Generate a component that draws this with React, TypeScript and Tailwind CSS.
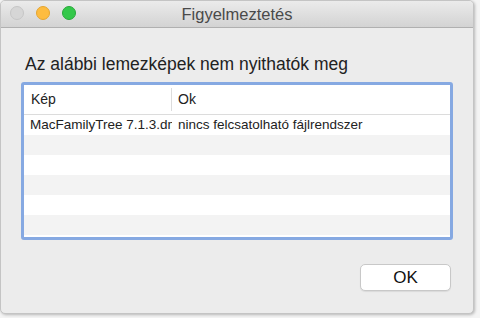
import React from 'react';

const rows = [
  { kep: 'MacFamilyTree 7.1.3.dmg', ok: 'nincs felcsatolható fájlrendszer' },
  { kep: '', ok: '' },
  { kep: '', ok: '' },
  { kep: '', ok: '' },
  { kep: '', ok: '' },
  { kep: '', ok: '' },
];

export default function App() {
  return (
    <div className="w-[480px] h-[318px] bg-[#f4f4f4] overflow-hidden font-['Liberation_Sans',sans-serif]">
      <div className="w-[474px] h-[314px] flex flex-col bg-[#ececec] rounded-[5px] border border-[#c4c4c4] overflow-hidden shadow-[1px_1px_3px_rgba(0,0,0,0.25)]">
        <div className="relative h-[27px] shrink-0 flex items-center justify-center bg-gradient-to-b from-[#ebebeb] to-[#d3d3d3] border-b border-[#b0b0b0]">
          <div className="absolute left-[9px] top-[5px] flex gap-[12px]">
            <span className="w-[14px] h-[14px] rounded-full bg-[#d6d6d6] border border-[#c6c6c6]" />
            <span className="w-[14px] h-[14px] rounded-full bg-[#fdbc40] border border-[#e5a530]" />
            <span className="w-[14px] h-[14px] rounded-full bg-[#34c84a] border border-[#28a83a]" />
          </div>
          <span className="text-[16.5px] text-[#4a4a4a]">Figyelmeztetés</span>
        </div>

        <div className="flex-1 flex flex-col px-[20px] pt-[25px]">
          <div className="pl-[4px] text-[17.5px] text-[#222] leading-[22px]">
            Az alábbi lemezképek nem nyithatók meg
          </div>

          <div className="mt-[7px] w-[432px] h-[158px] rounded-[3px] border-[3px] border-[#86a9e2] bg-white overflow-hidden">
            <div className="flex h-[30px] border-b border-[#dcdcdc] text-[14px] text-[#222]">
              <div className="w-[148px] flex items-center pl-[7px] border-r border-[#dcdcdc] my-[3px]">Kép</div>
              <div className="flex-1 flex items-center pl-[6px]">Ok</div>
            </div>
            {rows.map((r, i) => (
              <div
                key={i}
                className={`flex h-[20px] items-center text-[13.5px] text-[#222] ${i % 2 === 0 ? 'bg-white' : 'bg-[#f3f3f3]'}`}
              >
                <div className="w-[148px] pl-[6px] whitespace-nowrap overflow-hidden">{r.kep}</div>
                <div className="flex-1 pl-[6px] whitespace-nowrap">{r.ok}</div>
              </div>
            ))}
          </div>

          <div className="flex justify-end mt-[24px] pr-[2px]">
            <button className="w-[91px] h-[27px] rounded-[5px] bg-white border border-[#c8c8c8] shadow-[0_1px_1px_rgba(0,0,0,0.08)] text-[17px] text-[#111]">
              OK
            </button>
          </div>
        </div>
      </div>
    </div>
  );
}
